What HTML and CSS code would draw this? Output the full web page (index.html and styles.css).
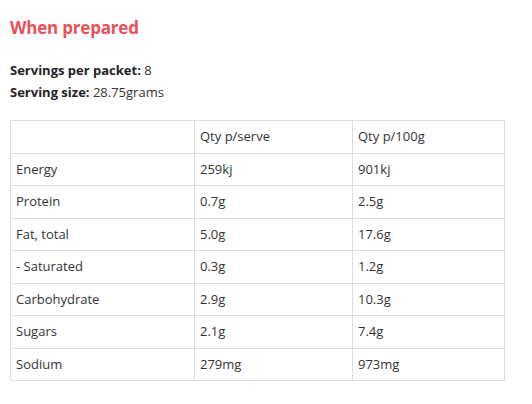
FILE: index.html
```html
<!DOCTYPE html>
<html>
<head>
<meta charset="utf-8">
<link rel="stylesheet" href="styles.css">
</head>
<body>
<div class="page">
  <h2 class="title">When prepared</h2>
  <div class="meta">
    <div class="meta-line"><strong>Servings per packet:</strong> 8</div>
    <div class="meta-line"><strong>Serving size:</strong> 28.75grams</div>
  </div>
  <table class="nutrition">
    <colgroup>
      <col class="c1">
      <col class="c2">
      <col class="c3">
    </colgroup>
    <tr><td></td><td>Qty p/serve</td><td>Qty p/100g</td></tr>
    <tr><td>Energy</td><td>259kj</td><td>901kj</td></tr>
    <tr><td>Protein</td><td>0.7g</td><td>2.5g</td></tr>
    <tr><td>Fat, total</td><td>5.0g</td><td>17.6g</td></tr>
    <tr><td>- Saturated</td><td>0.3g</td><td>1.2g</td></tr>
    <tr><td>Carbohydrate</td><td>2.9g</td><td>10.3g</td></tr>
    <tr><td>Sugars</td><td>2.1g</td><td>7.4g</td></tr>
    <tr><td>Sodium</td><td>279mg</td><td>973mg</td></tr>
  </table>
</div>
</body>
</html>
```
FILE: styles.css
```css
html, body {
  margin: 0;
  padding: 0;
  background: #fff;
}
.page {
  padding: 16px 10px 0 10px;
  font-family: "Open Sans", "DejaVu Sans", sans-serif;
  font-size: 13px;
  color: #333;
}
.title {
  margin: 0;
  font-size: 17px;
  line-height: 24px;
  font-weight: 700;
  letter-spacing: -0.2px;
  color: #e9505a;
}
.meta {
  margin-top: 19px;
}
.meta-line {
  line-height: 22px;
}
.meta-line strong {
  font-weight: 700;
  color: #222;
}
.nutrition {
  margin-top: 17px;
  border-collapse: collapse;
  table-layout: fixed;
  width: 494px;
}
.c1 { width: 184px; }
.c2 { width: 158px; }
.c3 { width: 152px; }
.nutrition td {
  border: 1px solid #ddd;
  padding: 6px 5px;
  line-height: 19.5px;
  vertical-align: top;
}
```
